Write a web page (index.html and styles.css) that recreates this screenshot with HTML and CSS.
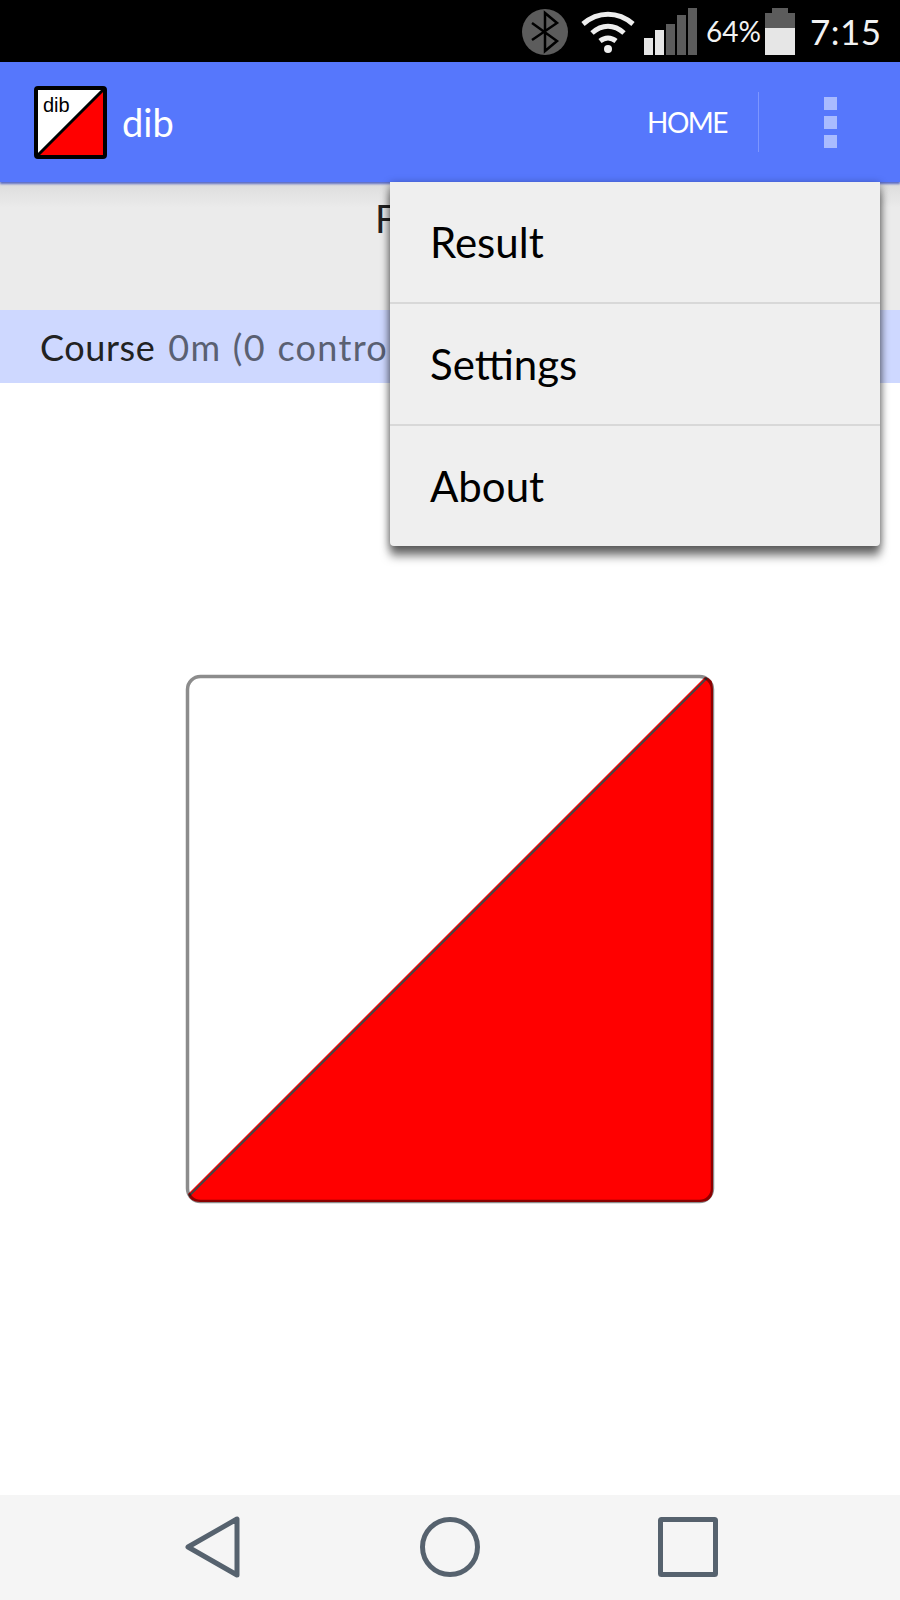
FILE: index.html
```html
<!DOCTYPE html>
<html lang="en">
<head>
    <meta charset="UTF-8">
    <meta name="viewport" content="width=device-width, initial-scale=1.0">
    <title>dib</title>
    <link rel="stylesheet" href="styles.css">
</head>
<body>
    <div class="screen">
        <div class="statusbar">
            <svg class="icon-bt" width="46" height="46" viewBox="0 0 46 46">
                <circle cx="23" cy="23" r="23" fill="#5c5c5c"/>
                <path d="M10 31 L35 14 L23 4 V42 L35 32 L10 14" fill="none" stroke="#000" stroke-width="2.5"/>
            </svg>
            <svg class="icon-wifi" width="56" height="42" viewBox="0 0 56 42">
                <path d="M3 13 C18 0 38 0 53 13" fill="none" stroke="#eee" stroke-width="5"/>
                <path d="M12 22 C22 13 34 13 44 22" fill="none" stroke="#eee" stroke-width="5"/>
                <path d="M20 30 C25 26 31 26 36 30" fill="none" stroke="#eee" stroke-width="5"/>
                <circle cx="28" cy="38" r="4" fill="#eee"/>
            </svg>
            <div class="signal">
                <span class="bar bar-on bar-1"></span>
                <span class="bar bar-on bar-2"></span>
                <span class="bar bar-3"></span>
                <span class="bar bar-4"></span>
                <span class="bar bar-5"></span>
            </div>
            <span class="percent">64%</span>
            <div class="battery">
                <div class="battery-tip"></div>
                <div class="battery-body"><div class="battery-level"></div></div>
            </div>
            <span class="clock">7:15</span>
        </div>

        <div class="appbar">
            <svg class="logo" width="73" height="73" viewBox="0 0 73 73">
                <rect x="2" y="2" width="69" height="69" rx="2" fill="#fff"/>
                <path d="M71 2 V71 H2 Z" fill="#f00"/>
                <path d="M71 2 L2 71" stroke="#000" stroke-width="3"/>
                <rect x="2" y="2" width="69" height="69" rx="2" fill="none" stroke="#000" stroke-width="4"/>
                <text class="logo-text" x="9" y="26">dib</text>
            </svg>
            <span class="app-title">dib</span>
            <span class="home">HOME</span>
            <div class="divider"></div>
            <div class="overflow">
                <span class="dot"></span>
                <span class="dot"></span>
                <span class="dot"></span>
            </div>
        </div>

        <div class="subheader">F</div>
        <div class="course"><span class="course-label">Course</span> <span class="course-info">0m (0 contro</span></div>

        <div class="main">
            <svg class="flag" width="530" height="530" viewBox="0 0 530 530">
                <rect x="2" y="2" width="526" height="526" rx="13" fill="#fff"/>
                <path d="M520 3 Q528 4 528 15 V515 Q528 528 515 528 H15 Q5 528 3 520 Z" fill="#f00"/>
                <path d="M522 4 L4 522" stroke="#444" stroke-width="2"/>
                <rect x="2.5" y="2.5" width="525" height="525" rx="13" fill="none" stroke="#000" stroke-opacity="0.45" stroke-width="3.5"/>
            </svg>
        </div>

        <div class="navbar">
            <svg width="56" height="62" viewBox="0 0 56 62">
                <path d="M3 31 L52 3 V59 Z" fill="none" stroke="#56626e" stroke-width="5" stroke-linejoin="round"/>
            </svg>
            <svg width="60" height="60" viewBox="0 0 60 60">
                <circle cx="30" cy="30" r="27.5" fill="none" stroke="#56626e" stroke-width="5"/>
            </svg>
            <svg width="60" height="60" viewBox="0 0 60 60">
                <rect x="2.5" y="2.5" width="55" height="55" rx="1" fill="none" stroke="#56626e" stroke-width="5"/>
            </svg>
        </div>

        <ul class="menu">
            <li>Result</li>
            <li>Settings</li>
            <li>About</li>
        </ul>
    </div>
</body>
</html>
```

FILE: styles.css
```css
* {
    box-sizing: border-box;
}
body {
    margin: 0;
    font-family: Lato, "Open Sans", sans-serif;
    background-color: #fff;
}
.screen {
    position: relative;
    display: flex;
    flex-direction: column;
    width: 900px;
    height: 1600px;
    overflow: hidden;
}
.statusbar {
    display: flex;
    align-items: center;
    flex: 0 0 62px;
    padding-left: 522px;
    background: #000;
    color: #f2f2f2;
}
.icon-bt {
    flex: none;
    margin-top: 1px;
}
.icon-wifi {
    flex: none;
    margin-left: 12px;
    margin-top: 1px;
}
.signal {
    display: flex;
    align-items: flex-end;
    gap: 2px;
    height: 47px;
    margin-left: 8px;
    margin-top: 1px;
}
.bar {
    width: 9px;
    background: #5c5c5c;
}
.bar-on {
    background: #e6e6e6;
}
.bar-1 { height: 17px; }
.bar-2 { height: 25px; }
.bar-3 { height: 31px; }
.bar-4 { height: 40px; }
.bar-5 { height: 47px; }
.percent {
    width: 68px;
    padding-left: 9px;
    font-size: 28px;
}
.battery {
    display: flex;
    flex-direction: column;
    align-items: center;
    width: 30px;
    margin-top: 1px;
}
.battery-tip {
    width: 16px;
    height: 5px;
    background: #5c5c5c;
}
.battery-body {
    width: 30px;
    height: 42px;
    background: #5c5c5c;
    display: flex;
    align-items: flex-end;
}
.battery-level {
    width: 100%;
    height: 27px;
    background: #e6e6e6;
}
.clock {
    margin-left: 15px;
    font-size: 35px;
    letter-spacing: 0.5px;
}
.appbar {
    position: relative;
    z-index: 2;
    display: flex;
    align-items: center;
    flex: 0 0 120px;
    padding-left: 34px;
    background: #5677fc;
    color: #fff;
    box-shadow: 0 2px 2px rgba(60,80,190,0.8);
}
.logo {
    flex: none;
}
.logo-text {
    font-family: "Liberation Sans", Arial, sans-serif;
    font-size: 20px;
    fill: #000;
}
.app-title {
    margin-left: 15px;
    font-size: 38px;
}
.home {
    margin-left: auto;
    font-size: 28px;
    letter-spacing: -1.5px;
}
.divider {
    width: 1px;
    height: 60px;
    margin-left: 31px;
    background: #7d96ff;
}
.overflow {
    display: flex;
    flex-direction: column;
    gap: 6px;
    margin-left: 65px;
    margin-right: 63px;
}
.dot {
    width: 13px;
    height: 13px;
    background: #a9bbff;
}
.subheader {
    flex: 0 0 128px;
    padding: 13px 0 0 375px;
    font-size: 38px;
    color: #222;
    background: linear-gradient(#dcdcdc, #ebebeb 26px);
}
.course {
    flex: 0 0 73px;
    padding: 15px 0 0 40px;
    font-size: 36px;
    line-height: 44px;
    letter-spacing: 0.6px;
    word-spacing: 3px;
    white-space: nowrap;
    background: #ced8ff;
}
.course-label {
    color: #222;
}
.course-info {
    color: #5a6072;
    letter-spacing: 1.3px;
    word-spacing: 1px;
}
.main {
    display: flex;
    align-items: center;
    justify-content: center;
    flex: 1;
}
.flag {
    flex: none;
}
.navbar {
    display: flex;
    align-items: center;
    flex: 0 0 105px;
    padding: 0 182px 1px 185px;
    justify-content: space-between;
    background: #f5f5f5;
}
.menu {
    position: absolute;
    z-index: 3;
    top: 182px;
    left: 390px;
    width: 490px;
    margin: 0;
    padding: 0;
    list-style: none;
    background: #efefef;
    border-radius: 0 0 4px 4px;
    box-shadow: 0 10px 10px rgba(0,0,0,0.5), 0 2px 8px rgba(0,0,0,0.4);
    font-size: 42px;
    color: #000;
}
.menu li {
    height: 122px;
    padding: 35px 0 0 40px;
    line-height: 50px;
    border-bottom: 2px solid #d8d8d8;
}
.menu li:last-child {
    height: 120px;
    border-bottom: none;
}
```
